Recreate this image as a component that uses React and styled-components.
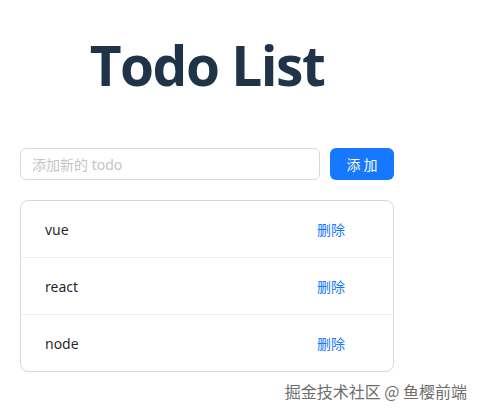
import React from "react";
import styled, { createGlobalStyle } from "styled-components";

const Global = createGlobalStyle`
  html, body { margin: 0; padding: 0; background: #fff; }
  body { font-family: "Segoe UI", "Noto Sans", "Noto Sans CJK SC", sans-serif; }
  * { box-sizing: border-box; }
`;

const Page = styled.div`
  position: relative;
  width: 479px;
  height: 413px;
  overflow: hidden;
`;

const Container = styled.div`
  width: 374px;
  margin-left: 20px;
  display: flex;
  flex-direction: column;
`;

const Title = styled.h1`
  margin: 25px 0 0;
  height: 123px;
  text-align: center;
  font-family: "Open Sans", sans-serif;
  font-weight: 700;
  font-size: 55px;
  line-height: 80px;
  color: #1f3349;
  letter-spacing: -1.5px;
`;

const Form = styled.div`
  display: flex;
  gap: 10px;
  height: 32px;
`;

const Input = styled.input`
  flex: 1;
  height: 32px;
  border: 1px solid #d9d9d9;
  border-radius: 6px;
  padding: 4px 11px;
  font-family: "Noto Sans", "Noto Sans CJK SC", sans-serif;
  font-size: 14px;
  color: #333;
  outline: none;
  &::placeholder { color: #c4c4c4; }
`;

const Button = styled.button`
  width: 64px;
  height: 32px;
  border: none;
  border-radius: 6px;
  background: #1677ff;
  color: #fff;
  font-family: "Noto Sans CJK SC", sans-serif;
  font-size: 14px;
  letter-spacing: 3px;
  padding: 0 0 0 3px;
  cursor: pointer;
`;

const List = styled.ul`
  list-style: none;
  margin: 20px 0 0;
  padding: 0;
  border: 1px solid #d9d9d9;
  border-radius: 8px;
`;

const Item = styled.li`
  display: flex;
  align-items: center;
  justify-content: space-between;
  height: ${p => (p.$last ? 56 : 57)}px;
  padding: 0 48px 0 24px;
  border-bottom: ${p => (p.$last ? "none" : "1px solid #f0f0f0")};
  font-family: "Noto Sans", "Noto Sans CJK SC", sans-serif;
  font-size: 14px;
  color: rgba(0, 0, 0, 0.88);
`;

const Delete = styled.a`
  color: #1677ff;
  font-family: "Noto Sans CJK SC", sans-serif;
  font-size: 14px;
  cursor: pointer;
`;

const Watermark = styled.div`
  position: absolute;
  right: 12px;
  top: 379px;
  font-family: "Noto Sans CJK SC", sans-serif;
  font-size: 16px;
  line-height: 24px;
  color: #6e6e6e;
  text-shadow: 0 0 2px #fff, 0 0 1px #fff;
`;

const todos = ["vue", "react", "node"];

export default function App() {
  return (
    <Page>
      <Global />
      <Container>
        <Title>Todo List</Title>
        <Form>
          <Input placeholder="添加新的 todo" />
          <Button>添加</Button>
        </Form>
        <List>
          {todos.map((t, i) => (
            <Item key={t} $last={i === todos.length - 1}>
              <span>{t}</span>
              <Delete>删除</Delete>
            </Item>
          ))}
        </List>
      </Container>
      <Watermark>掘金技术社区 @ 鱼樱前端</Watermark>
    </Page>
  );
}
